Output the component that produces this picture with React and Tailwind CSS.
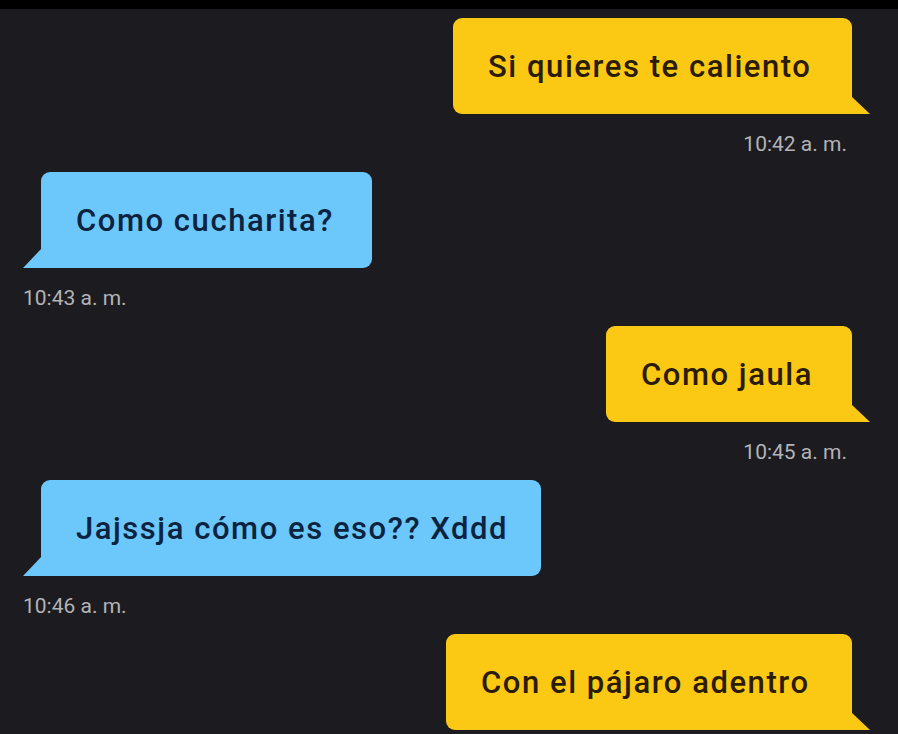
import React from "react";

const messages = [
  { id: 1, mine: true, text: "Si quieres te caliento", time: "10:42 a. m.", width: "w-[399px]" },
  { id: 2, mine: false, text: "Como cucharita?", time: "10:43 a. m.", width: "w-[331px]" },
  { id: 3, mine: true, text: "Como jaula", time: "10:45 a. m.", width: "w-[246px]" },
  { id: 4, mine: false, text: "Jajssja cómo es eso?? Xddd", time: "10:46 a. m.", width: "w-[500px]" },
  { id: 5, mine: true, text: "Con el pájaro adentro", time: "", width: "w-[406px]" },
];

const Tail = ({ mine }) =>
  mine ? (
    <svg
      className="absolute bottom-0 right-[-18px]"
      width="19"
      height="18"
      viewBox="0 0 19 18"
    >
      <polygon points="0,0 19,18 0,18" fill="#fbc914" />
    </svg>
  ) : (
    <svg
      className="absolute bottom-0 left-[-18px]"
      width="19"
      height="20"
      viewBox="0 0 19 20"
    >
      <polygon points="19,0 0,20 19,20" fill="#6cc7fb" />
    </svg>
  );

const Bubble = ({ msg }) => {
  const side = msg.mine
    ? "self-end mr-[46px] bg-[#fbc914] text-[#2a1c06] rounded-[9px] rounded-br-none"
    : "self-start ml-[41px] bg-[#6cc7fb] text-[#0c2340] rounded-[9px] rounded-bl-none";

  return (
    <div className="flex flex-col">
      <div
        className={`relative flex h-[96px] items-center pl-[35px] ${msg.width} ${side}`}
      >
        <span className="text-[31px] font-medium leading-none tracking-[0.05em] whitespace-nowrap">
          {msg.text}
        </span>
        <Tail mine={msg.mine} />
      </div>
      {msg.time && (
        <div
          className={`mt-[18px] mb-[16px] text-[21px] leading-[24px] text-[#b3b3b6] ${
            msg.mine ? "self-end mr-[51px]" : "self-start ml-[23px]"
          }`}
        >
          {msg.time}
        </div>
      )}
    </div>
  );
};

export default function App() {
  return (
    <div
      className="h-[734px] w-full overflow-hidden bg-[#1c1b20]"
      style={{ fontFamily: "Roboto, 'Liberation Sans', sans-serif" }}
    >
      <div className="h-[9px] bg-black" />
      <div className="flex flex-col pt-[9px]">
        {messages.map((msg) => (
          <Bubble key={msg.id} msg={msg} />
        ))}
      </div>
    </div>
  );
}
